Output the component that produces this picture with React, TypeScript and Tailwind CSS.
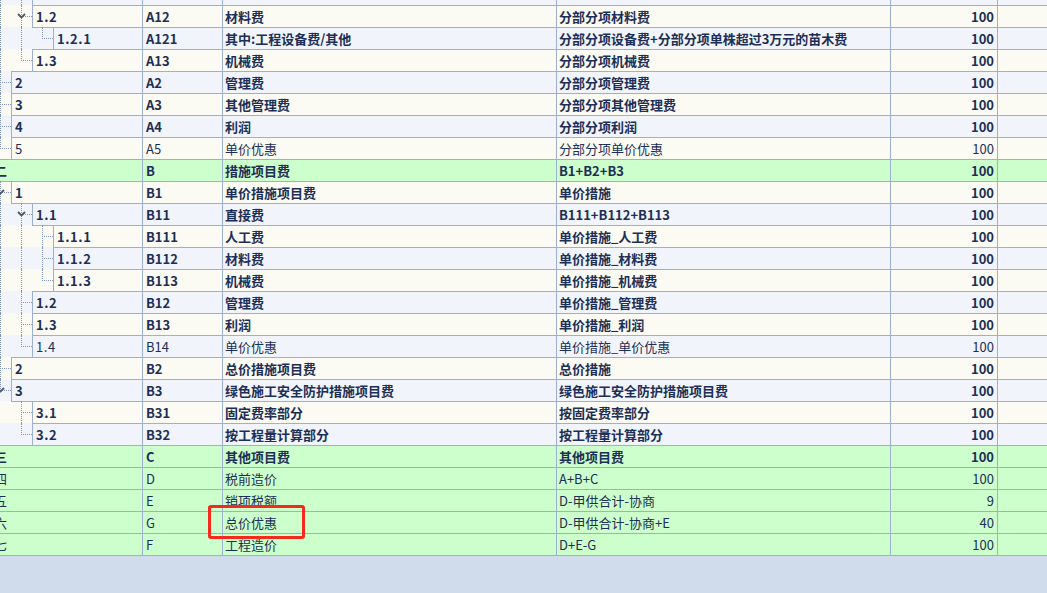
type Row = {
    no: string;
    code: string;
    name: string;
    formula: string;
    amount: string;
    level: number;
    bold?: boolean;
    open?: boolean;
};

// first row only peeks in at the top edge, its text is scrolled away
const rows: Row[] = [
    { no: '', code: '', name: '', formula: '', amount: '', level: 2, bold: true },
    { no: '1.2', code: 'A12', name: '材料费', formula: '分部分项材料费', amount: '100', level: 2, bold: true, open: true },
    { no: '1.2.1', code: 'A121', name: '其中:工程设备费/其他', formula: '分部分项设备费+分部分项单株超过3万元的苗木费', amount: '100', level: 3, bold: true },
    { no: '1.3', code: 'A13', name: '机械费', formula: '分部分项机械费', amount: '100', level: 2, bold: true },
    { no: '2', code: 'A2', name: '管理费', formula: '分部分项管理费', amount: '100', level: 1, bold: true },
    { no: '3', code: 'A3', name: '其他管理费', formula: '分部分项其他管理费', amount: '100', level: 1, bold: true },
    { no: '4', code: 'A4', name: '利润', formula: '分部分项利润', amount: '100', level: 1, bold: true },
    { no: '5', code: 'A5', name: '单价优惠', formula: '分部分项单价优惠', amount: '100', level: 1 },
    { no: '二', code: 'B', name: '措施项目费', formula: 'B1+B2+B3', amount: '100', level: 0, bold: true, open: true },
    { no: '1', code: 'B1', name: '单价措施项目费', formula: '单价措施', amount: '100', level: 1, bold: true, open: true },
    { no: '1.1', code: 'B11', name: '直接费', formula: 'B111+B112+B113', amount: '100', level: 2, bold: true, open: true },
    { no: '1.1.1', code: 'B111', name: '人工费', formula: '单价措施_人工费', amount: '100', level: 3, bold: true },
    { no: '1.1.2', code: 'B112', name: '材料费', formula: '单价措施_材料费', amount: '100', level: 3, bold: true },
    { no: '1.1.3', code: 'B113', name: '机械费', formula: '单价措施_机械费', amount: '100', level: 3, bold: true },
    { no: '1.2', code: 'B12', name: '管理费', formula: '单价措施_管理费', amount: '100', level: 2, bold: true },
    { no: '1.3', code: 'B13', name: '利润', formula: '单价措施_利润', amount: '100', level: 2, bold: true },
    { no: '1.4', code: 'B14', name: '单价优惠', formula: '单价措施_单价优惠', amount: '100', level: 2 },
    { no: '2', code: 'B2', name: '总价措施项目费', formula: '总价措施', amount: '100', level: 1, bold: true },
    { no: '3', code: 'B3', name: '绿色施工安全防护措施项目费', formula: '绿色施工安全防护措施项目费', amount: '100', level: 1, bold: true, open: true },
    { no: '3.1', code: 'B31', name: '固定费率部分', formula: '按固定费率部分', amount: '100', level: 2, bold: true },
    { no: '3.2', code: 'B32', name: '按工程量计算部分', formula: '按工程量计算部分', amount: '100', level: 2, bold: true },
    { no: '三', code: 'C', name: '其他项目费', formula: '其他项目费', amount: '100', level: 0, bold: true },
    { no: '四', code: 'D', name: '税前造价', formula: 'A+B+C', amount: '100', level: 0 },
    { no: '五', code: 'E', name: '销项税额', formula: 'D-甲供合计-协商', amount: '9', level: 0 },
    { no: '六', code: 'G', name: '总价优惠', formula: 'D-甲供合计-协商+E', amount: '40', level: 0 },
    { no: '七', code: 'F', name: '工程造价', formula: 'D+E-G', amount: '100', level: 0 },
];

// does a node at this level continue below row i (a later sibling)?
function hasNext(i: number, level: number) {
    for (let j = i + 1; j < rows.length; j++) {
        if (rows[j].level < level) return false;
        if (rows[j].level === level) return true;
    }
    return false;
}

function rowBg(row: Row, i: number) {
    if (row.level === 0) return 'bg-[#ccffcc]';
    return i % 2 === 1 ? 'bg-[#fbfbf3]' : 'bg-[#f1f5fb]';
}

function Chevron() {
    return (
        <svg
            width="9"
            height="6"
            viewBox="0 0 9 6"
            className="absolute top-[7px] left-[6px]"
        >
            <polyline
                points="1,1 4.5,4.5 8,1"
                fill="none"
                stroke="#4f5868"
                strokeWidth="1.8"
            />
        </svg>
    );
}

function Guide({ index, k, row, topLine }: { index: number; k: number; row: Row; topLine: boolean }) {
    const own = k === row.level;
    const more = hasNext(index, k);
    return (
        <div
            className={`relative w-[21px] shrink-0 border-t ${topLine ? 'border-[#9eb0d0]' : 'border-transparent'}`}
        >
            {k > 0 && own && (
                <>
                    <div
                        className={`absolute top-[-1px] left-[10px] border-l border-dotted border-[#8295bf] ${more ? 'bottom-0' : 'h-[12px]'}`}
                    />
                    <div className="absolute top-[10px] right-0 left-[10px] border-t border-dotted border-[#8295bf]" />
                    {row.open && <Chevron />}
                </>
            )}
            {k > 0 && !own && more && (
                <div className="absolute top-[-1px] bottom-0 left-[10px] border-l border-dotted border-[#8295bf]" />
            )}
        </div>
    );
}

export default function App() {
    return (
        <div
            className="relative h-[593px] w-[1047px] overflow-hidden bg-[#d0dcec] text-[13px] text-[#1d2f56]"
            style={{ fontFamily: '"Noto Sans CJK SC", "Liberation Sans", sans-serif' }}
        >
            <div className="-mt-[17px] -ml-[31px] w-[1229px]">
                {rows.map((row, i) => {
                    const prevLevel = i > 0 ? rows[i - 1].level : row.level;
                    const lineFrom = Math.min(prevLevel, row.level);
                    const last = i === rows.length - 1;
                    const edge = `border-t border-[#9eb0d0] ${last ? 'border-b' : ''}`;
                    return (
                        <div
                            key={i}
                            className={`flex h-[22px] leading-[21px] whitespace-nowrap ${last ? 'h-[23px]' : ''} ${rowBg(row, i)} ${row.bold ? 'font-bold' : 'font-normal'}`}
                        >
                            <div className="flex w-[174px] shrink-0">
                                {Array.from({ length: row.level + 1 }, (_, k) => (
                                    <Guide
                                        key={k}
                                        index={i}
                                        k={k}
                                        row={row}
                                        topLine={k > lineFrom}
                                    />
                                ))}
                                <div className={`min-w-0 flex-1 overflow-hidden border-r border-l pl-[3px] tracking-[0.6px] ${edge}`}>
                                    {row.no}
                                </div>
                            </div>
                            <div className={`w-[80px] shrink-0 border-r pl-[3px] ${edge}`}>
                                {row.code}
                            </div>
                            <div className={`w-[334px] shrink-0 border-r pl-[2px] ${edge}`}>
                                {row.name}
                            </div>
                            <div className={`w-[334px] shrink-0 border-r pl-[2px] ${edge}`}>
                                {row.formula}
                            </div>
                            <div className={`w-[107px] shrink-0 border-r pr-[3px] text-right ${edge}`}>
                                {row.amount}
                            </div>
                            <div className={`w-[200px] shrink-0 border-r ${edge}`} />
                        </div>
                    );
                })}
            </div>
            <div className="absolute top-[505px] left-[208px] h-[34px] w-[97px] rounded-[3px] border-[3px] border-[#f42a1c]" />
        </div>
    );
}
